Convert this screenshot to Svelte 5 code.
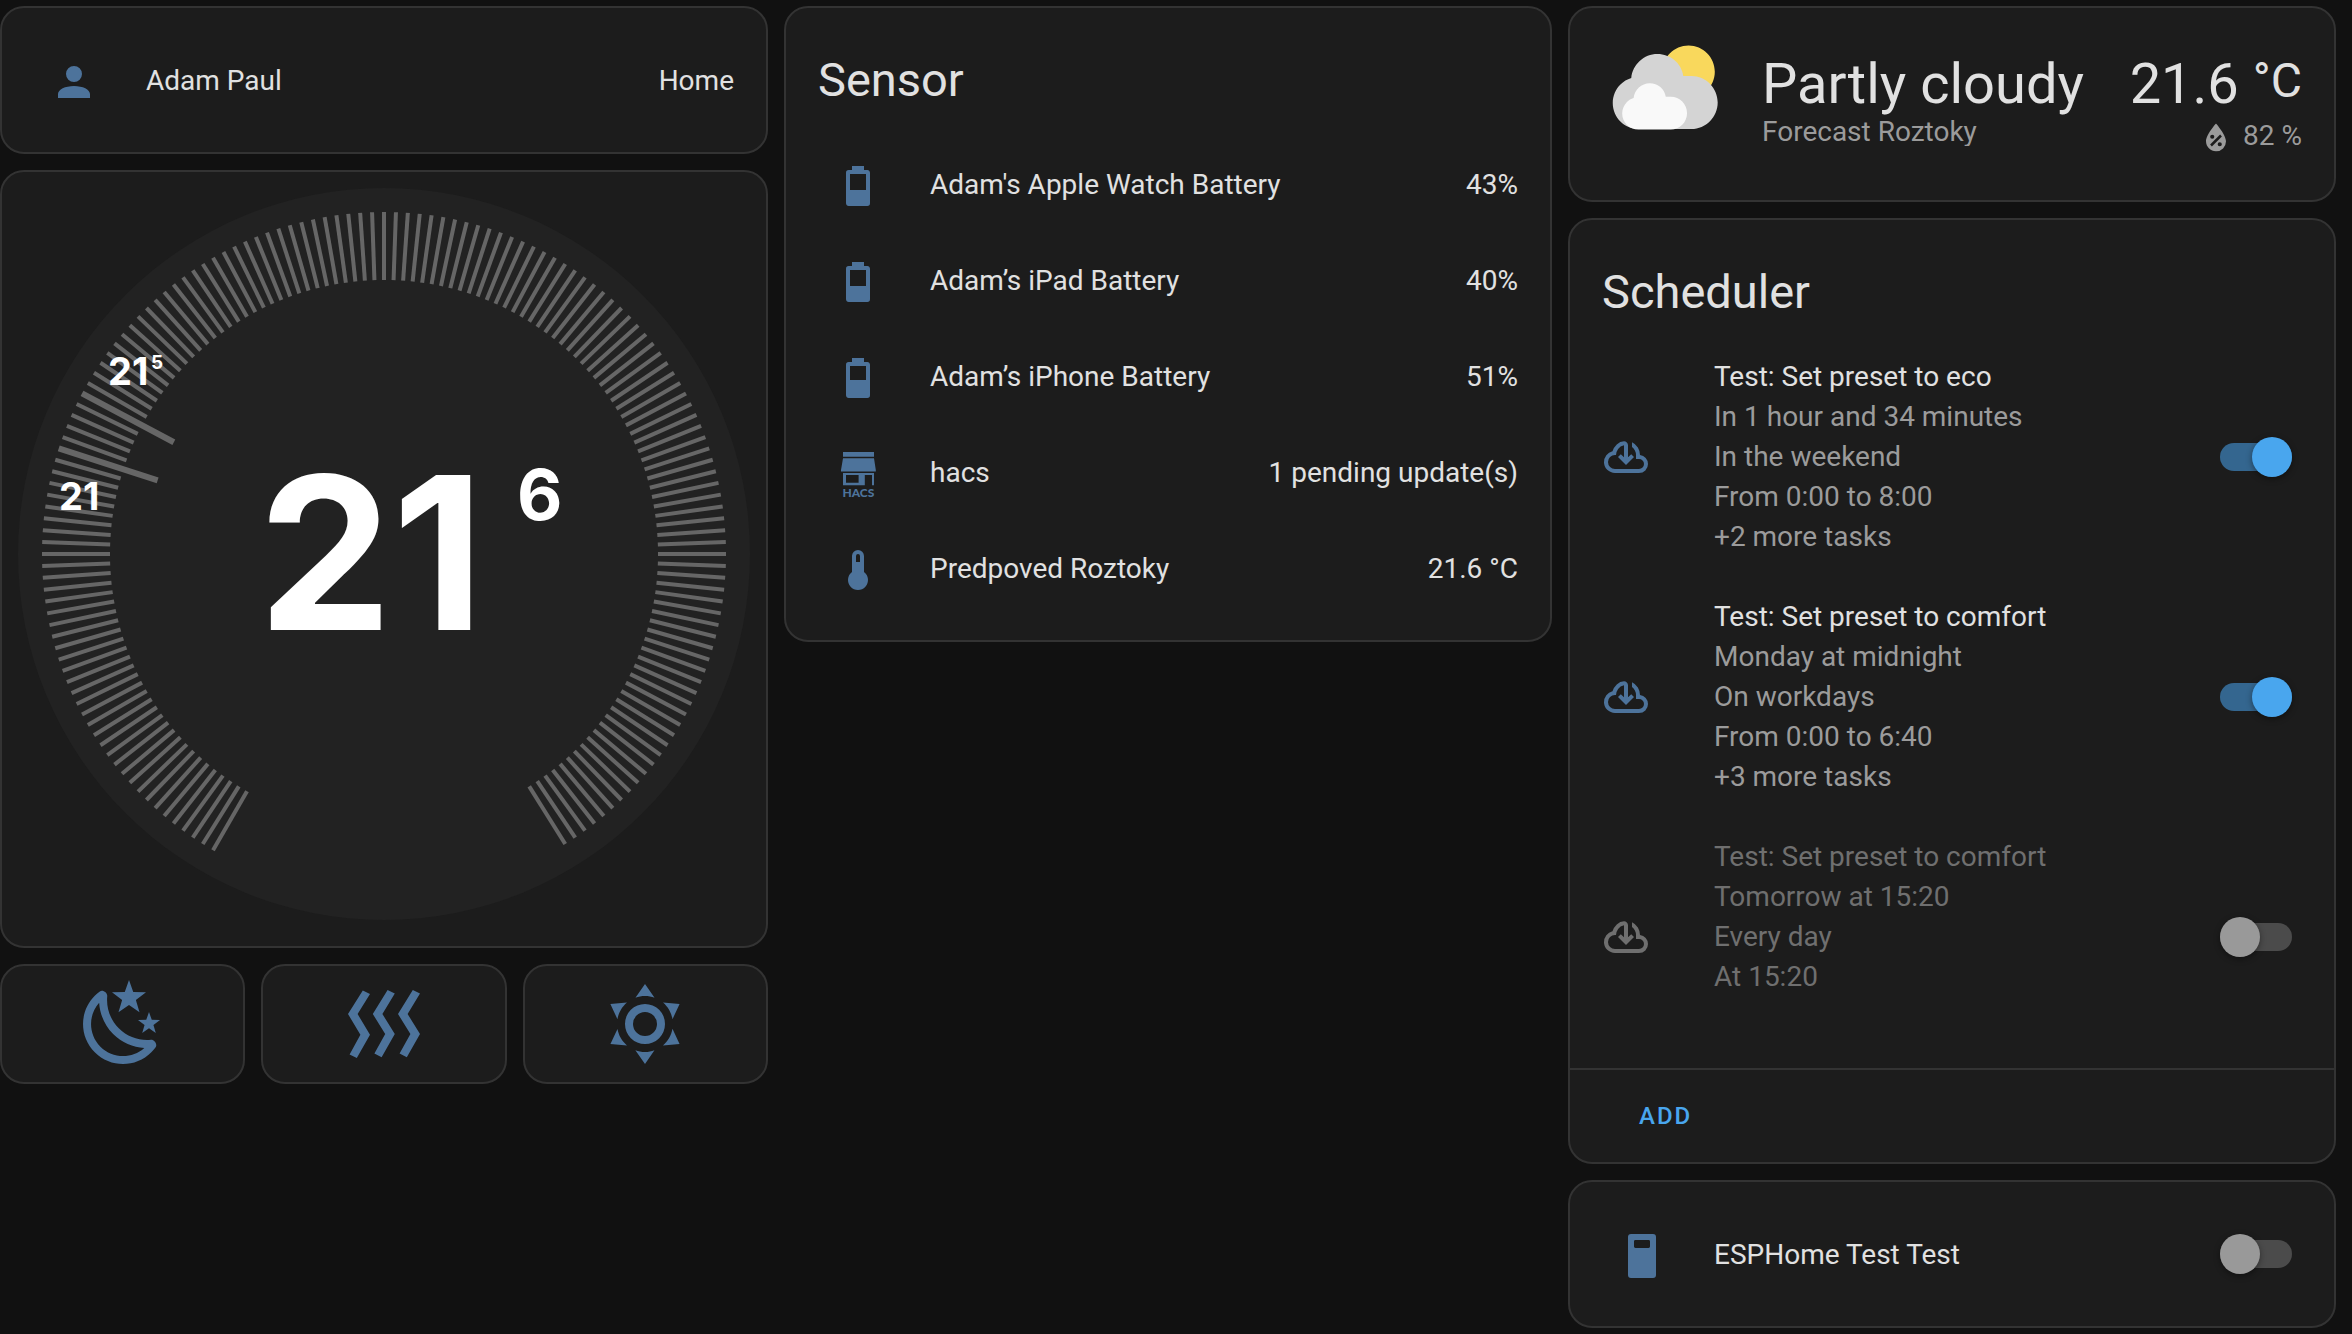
<script>
  const icons = {
    account:
      'M12,4A4,4 0 0,1 16,8A4,4 0 0,1 12,12A4,4 0 0,1 8,8A4,4 0 0,1 12,4M12,14C16.42,14 20,15.79 20,18V20H4V18C4,15.79 7.58,14 12,14Z',
    battery40:
      'M16,14H8V6H16M16.67,4H15V2H9V4H7.33A1.33,1.33 0 0,0 6,5.33V20.67C6,21.4 6.6,22 7.33,22H16.67A1.33,1.33 0 0,0 18,20.67V5.33C18,4.6 17.4,4 16.67,4Z',
    battery50:
      'M16,13H8V6H16M16.67,4H15V2H9V4H7.33A1.33,1.33 0 0,0 6,5.33V20.67C6,21.4 6.6,22 7.33,22H16.67A1.33,1.33 0 0,0 18,20.67V5.33C18,4.6 17.4,4 16.67,4Z',
    thermometer:
      'M15 13V5A3 3 0 0 0 9 5V13A5 5 0 1 0 15 13M12 4A1 1 0 0 1 13 5V8H11V5A1 1 0 0 1 12 4Z',
    device:
      'M6.5 1H17.5A1.5 1.5 0 0 1 19 2.5V21.5A1.5 1.5 0 0 1 17.5 23H6.5A1.5 1.5 0 0 1 5 21.5V2.5A1.5 1.5 0 0 1 6.5 1M8.7 4A.7 .7 0 0 0 8 4.7V7.3A.7 .7 0 0 0 8.700 8H15.3A.7 .7 0 0 0 16 7.3V4.7A.7 .7 0 0 0 15.3 4Z',
    cloud:
      'M6.5 20Q4.22 20 2.61 18.43 1 16.85 1 14.58 1 12.63 2.17 11.1 3.35 9.57 5.25 9.15 5.68 7.35 7.38 5.73 9.07 4.1 11 4.1 11.83 4.1 12.41 4.69 13 5.28 13 6.1V12.15L14.6 10.6L16 12L12 16L8 12L9.4 10.6L11 12.15V6.1Q9.1 6.45 8.05 7.94 7 9.43 7 11H6.5Q5.05 11 4.03 12.03 3 13.05 3 14.5 3 15.95 4.03 17 5.05 18 6.5 18H18.5Q19.55 18 20.27 17.27 21 16.55 21 15.5 21 14.45 20.27 13.73 19.55 13 18.5 13H17V11Q17 9.8 16.45 8.76 15.9 7.73 15 7V4.68Q16.85 5.55 17.93 7.26 19 9 19 11 20.73 11.2 21.86 12.5 23 13.78 23 15.5 23 17.38 21.69 18.69 20.38 20 18.5 20M12 11.05Z',
    humidity:
      'M12,3.25C12,3.25 6,10 6,14C6,17.32 8.69,20 12,20A6,6 0 0,0 18,14C18,10 12,3.25 12,3.25M14.47,9.97L15.53,11.03L9.53,17.03L8.47,15.97M9.75,10A1.25,1.25 0 0,1 11,11.25A1.25,1.25 0 0,1 9.75,12.5A1.25,1.25 0 0,1 8.5,11.25A1.25,1.25 0 0,1 9.75,10M14.25,14.5A1.25,1.25 0 0,1 15.5,15.75A1.25,1.25 0 0,1 14.25,17A1.25,1.25 0 0,1 13,15.75A1.25,1.25 0 0,1 14.25,14.5Z',
    night:
      'M17.75,4.09L15.22,6.03L16.13,9.09L13.5,7.28L10.87,9.09L11.78,6.03L9.25,4.09L12.44,4L13.5,1L14.56,4L17.75,4.09M21.25,11L19.61,12.25L20.2,14.23L18.5,13.06L16.8,14.23L17.39,12.25L15.75,11L17.81,10.95L18.5,9L19.19,10.95L21.25,11M18.97,15.95C19.8,15.87 20.69,17.05 20.16,17.8C19.84,18.25 19.5,18.67 19.08,19.07C15.17,23 8.84,23 4.94,19.07C1.03,15.17 1.03,8.83 4.94,4.93C5.34,4.53 5.76,4.17 6.21,3.85C6.96,3.32 8.14,4.21 8.06,5.04C7.79,7.9 8.75,10.87 10.95,13.06C13.14,15.26 16.1,16.22 18.97,15.95M17.33,17.97C14.5,17.81 11.7,16.64 9.53,14.5C7.36,12.31 6.2,9.5 6.04,6.68C3.23,9.82 3.34,14.64 6.35,17.66C9.37,20.67 14.19,20.78 17.33,17.97Z',
    heat:
      'M8.5 4.5L5.4 9.5L8.5 14.7L5.2 20.5L3.4 19.6L6.1 14.7L3 9.5L6.7 3.6L8.5 4.5M14.7 4.4L11.6 9.5L14.7 14.5L11.4 20.3L9.6 19.4L12.3 14.5L9.2 9.5L12.9 3.5L14.7 4.4M21 4.4L17.9 9.5L21 14.5L17.7 20.3L15.9 19.4L18.6 14.5L15.5 9.5L19.2 3.5L21 4.4',
    sun:
      'M12,7A5,5 0 0,1 17,12A5,5 0 0,1 12,17A5,5 0 0,1 7,12A5,5 0 0,1 12,7M12,9A3,3 0 0,0 9,12A3,3 0 0,0 12,15A3,3 0 0,0 15,12A3,3 0 0,0 12,9M12,2L14.39,5.42C13.65,5.15 12.84,5 12,5C11.16,5 10.35,5.15 9.61,5.42L12,2M3.34,7L7.5,6.65C6.9,7.16 6.36,7.78 5.94,8.5C5.5,9.24 5.25,10 5.11,10.79L3.34,7M3.36,17L5.12,13.23C5.26,14 5.53,14.78 5.95,15.5C6.37,16.24 6.91,16.86 7.5,17.37L3.36,17M20.65,7L18.88,10.79C18.74,10 18.47,9.23 18.05,8.5C17.63,7.78 17.1,7.15 16.5,6.64L20.65,7M20.64,17L16.5,17.36C17.09,16.85 17.62,16.22 18.04,15.5C18.46,14.77 18.73,14 18.87,13.21L20.64,17M12,22L9.59,18.56C10.33,18.83 11.14,19 12,19C12.82,19 13.63,18.83 14.37,18.56L12,22Z'
  };

  const sensors = [
    { icon: 'battery40', name: "Adam's Apple Watch Battery", state: '43%' },
    { icon: 'battery40', name: 'Adam’s iPad Battery', state: '40%' },
    { icon: 'battery50', name: 'Adam’s iPhone Battery', state: '51%' },
    { icon: 'hacs', name: 'hacs', state: '1 pending update(s)' },
    { icon: 'thermometer', name: 'Predpoved Roztoky', state: '21.6 °C' }
  ];

  let schedules = $state([
    {
      name: 'Test: Set preset to eco',
      lines: ['In 1 hour and 34 minutes', 'In the weekend', 'From 0:00 to 8:00', '+2 more tasks'],
      on: true
    },
    {
      name: 'Test: Set preset to comfort',
      lines: ['Monday at midnight', 'On workdays', 'From 0:00 to 6:40', '+3 more tasks'],
      on: true
    },
    {
      name: 'Test: Set preset to comfort',
      lines: ['Tomorrow at 15:20', 'Every day', 'At 15:20'],
      on: false
    }
  ]);

  const presets = [
    { icon: 'night', label: 'Sleep' },
    { icon: 'heat', label: 'Heat' },
    { icon: 'sun', label: 'Day' }
  ];

  let espOn = $state(false);

  // Dial scale: 150 ticks spread over 300 degrees; the marked ones are longer and wider.
  const marked = [-62, -72];
  const ticks = Array.from({ length: 150 }, (_, i) => {
    const angle = -150 + i * 2;
    return { angle, big: marked.includes(angle) };
  });
</script>

{#snippet icon(name)}
  <svg class="icon" viewBox="0 0 24 24" aria-hidden="true">
    {#if name === 'hacs'}
      <path d="M4.500 1H20V3.400H4.500ZM4.500 4.100H20L20.900 10V10.800H3.500V10Z" />
      <path fill-rule="evenodd" d="M4.500 11.500H20V17.600H19V12.500H15.400V17.600H4.500ZM6 12.500V16.400H12.300V12.500Z" />
      <text class="hacs" x="12.200" y="23.400" text-anchor="middle">HACS</text>
    {:else}
      <path fill-rule="evenodd" d={icons[name]} />
    {/if}
  </svg>
{/snippet}

<main class="board">
  <div class="column">
    <section class="card rows">
      <div class="row">
        <span class="badge">{@render icon('account')}</span>
        <span class="name">Adam Paul</span>
        <span class="state">Home</span>
      </div>
    </section>

    <section class="card thermostat" aria-label="Thermostat">
      <svg class="dial" viewBox="0 0 732 732">
        <circle class="face" cx="366" cy="366" r="366" />
        {#each ticks as t (t.angle)}
          <rect
            class="tick"
            x={t.big ? 363 : 364}
            y="24"
            width={t.big ? 6 : 4}
            height={t.big ? 104 : 68}
            transform="rotate({t.angle} 366 366)"
          />
        {/each}
        <text class="current" x="353" y="442" text-anchor="middle">21</text>
        <text class="fraction" x="499" y="332">6</text>
        <text class="label" x="90" y="197">21</text>
        <text class="label-fraction" x="133" y="181">5</text>
        <text class="label" x="41" y="322">21</text>
      </svg>
    </section>

    <div class="presets">
      {#each presets as p (p.icon)}
        <button class="card preset" type="button" aria-label={p.label}>{@render icon(p.icon)}</button>
      {/each}
    </div>
  </div>

  <div class="column">
    <section class="card">
      <h2>Sensor</h2>
      <div class="rows sensors">
        {#each sensors as s (s.name)}
          <div class="row">
            <span class="badge">{@render icon(s.icon)}</span>
            <span class="name">{s.name}</span>
            <span class="state">{s.state}</span>
          </div>
        {/each}
      </div>
    </section>
  </div>

  <div class="column">
    <section class="card weather">
      <svg class="weather-icon" viewBox="0 0 17 17" aria-hidden="true">
        <path fill="#f9d85c" d="m 14.981 4.2112 c 0 1.9244 -1.56 3.4844 -3.484 3.4844 -1.9244 0 -3.4844 -1.56 -3.4844 -3.4844 s 1.56 -3.484 3.4844 -3.484 c 1.924 0 3.484 1.5596 3.484 3.484" />
        <path fill="#d4d4d4" d="m3.8863 5.035c-0.54892 0.16898-1.04 0.46637-1.4372 0.8636-0.63077 0.63041-1.0206 1.4933-1.0206 2.455 0 1.9251 1.5589 3.4682 3.4837 3.4682h6.9688c1.9251 0 3.484-1.5981 3.484-3.5232 0-1.9251-1.5589-3.5232-3.484-3.5232h-1.0834c-0.25294-1.6916-1.6986-2.9083-3.4463-2.9083-1.7995 0-3.2805 1.4153-3.465 3.1679" />
        <path fill="#f9f9f9" d="m4.1996 7.6995c-0.33902 0.10407-0.64276 0.28787-0.88794 0.5334-0.39017 0.38982-0.63147 0.92322-0.63147 1.5176 0 1.1896 0.96414 2.1431 2.1537 2.1431h4.3071c1.1896 0 2.153-0.98742 2.153-2.1777 0-1.1896-0.96344-2.1777-2.153-2.1777h-0.66992c-0.15593-1.0449-1.0499-1.7974-2.1297-1.7974-1.112 0-2.0274 0.87524-2.1417 1.9586" />
      </svg>
      <div class="condition">
        <div class="big">Partly cloudy</div>
        <div class="place">Forecast Roztoky</div>
      </div>
      <div class="reading">
        <div class="big temp">21.6 <span class="unit">°C</span></div>
        <div class="humidity">{@render icon('humidity')}<span>82 %</span></div>
      </div>
    </section>

    <section class="card">
      <h2>Scheduler</h2>
      <div class="schedules">
        {#each schedules as s, i}
          <div class="schedule" class:off={!s.on}>
            <span class="schedule-icon">{@render icon('cloud')}</span>
            <label class="name" for="schedule-{i}">
              <span class="title">{s.name}</span>
              {#each s.lines as line}
                <span class="line">{line}</span>
              {/each}
            </label>
            <input class="switch" type="checkbox" role="switch" id="schedule-{i}" bind:checked={s.on} />
          </div>
        {/each}
      </div>
      <div class="footer">
        <button class="add" type="button">ADD</button>
      </div>
    </section>

    <section class="card rows">
      <div class="row">
        <span class="badge">{@render icon('device')}</span>
        <label class="name" for="esp">ESPHome Test Test</label>
        <input class="switch" type="checkbox" role="switch" id="esp" bind:checked={espOn} />
      </div>
    </section>
  </div>
</main>

<style>
  :global(body) {
    background: #111111;
  }

  .board {
    display: grid;
    grid-template-columns: repeat(3, minmax(0, 1fr));
    align-items: start;
    gap: 16px;
    padding: 6px 16px 6px 0;
    color: #e1e1e1;
    font: 400 28px/40px Roboto, sans-serif;
  }

  .column {
    display: flex;
    flex-direction: column;
    gap: 16px;
  }

  .card {
    box-sizing: border-box;
    border: 2px solid #333333;
    border-radius: 24px;
    background: #1c1c1c;
  }

  h2 {
    margin: 0;
    padding: 24px 32px 0;
    font-size: 47px;
    font-weight: 400;
    line-height: 96px;
  }

  .icon {
    display: block;
    flex: none;
    width: 48px;
    height: 48px;
    overflow: visible;
    fill: currentColor;
  }

  .hacs {
    font: 900 6px Lato, sans-serif;
  }

  .rows {
    display: flex;
    flex-direction: column;
    gap: 16px;
    padding: 32px;
  }

  .sensors {
    padding-top: 16px;
  }

  .row {
    display: flex;
    align-items: center;
    min-height: 80px;
  }

  .badge {
    box-sizing: border-box;
    display: flex;
    flex: none;
    align-items: center;
    justify-content: center;
    width: 80px;
    height: 80px;
    padding-top: 4px;
    margin-right: 32px;
    color: #4d739b;
  }

  .name {
    flex: 1;
    min-width: 0;
  }

  .row .name,
  .state {
    padding-top: 2px;
  }

  .thermostat {
    padding: 16px 16px 26px;
  }

  .dial {
    display: block;
    width: 100%;
    height: auto;
    fill: #ffffff;
    font-family: Inter, sans-serif;
    font-weight: 700;
  }

  .face {
    fill: #222222;
  }

  .tick {
    fill: #666666;
  }

  .current {
    font-size: 213px;
  }

  .fraction {
    font-size: 70px;
  }

  .label {
    font-size: 38px;
  }

  .label-fraction {
    font-size: 19px;
  }

  .presets {
    display: grid;
    grid-template-columns: repeat(3, minmax(0, 1fr));
    gap: 16px;
  }

  .preset {
    display: flex;
    align-items: center;
    justify-content: center;
    padding: 10px;
    color: #4d739b;
    cursor: pointer;
  }

  .preset .icon {
    width: 96px;
    height: 96px;
  }

  .weather {
    display: flex;
    align-items: flex-start;
    padding: 32px;
  }

  .weather-icon {
    flex: none;
    width: 128px;
    height: 128px;
    margin-right: 32px;
  }

  .condition {
    flex: 1;
    min-width: 0;
    padding-top: 11px;
  }

  .reading {
    display: flex;
    flex-direction: column;
    align-items: flex-end;
    padding-top: 11px;
  }

  .big {
    font-size: 56px;
    line-height: 67px;
    white-space: nowrap;
  }

  .temp {
    display: flex;
    align-items: flex-start;
    gap: 14px;
  }

  .unit {
    font-size: 48px;
    line-height: 60px;
  }

  .place {
    overflow: hidden;
    color: #9b9b9b;
    line-height: 28px;
    white-space: nowrap;
  }

  .humidity {
    display: flex;
    gap: 7px;
    color: #9b9b9b;
    line-height: 36px;
  }

  .humidity .icon {
    width: 40px;
    height: 40px;
  }

  .schedules {
    display: flex;
    flex-direction: column;
    gap: 39px;
    padding: 16px 32px 31px;
  }

  .schedule {
    display: flex;
    align-items: center;
    min-height: 201px;
    color: #9b9b9b;
  }

  .schedule .name {
    align-self: flex-start;
    padding-top: 1px;
  }

  .schedule-icon {
    flex: none;
    width: 80px;
    margin-right: 32px;
    color: #4d739b;
  }

  .title,
  .line {
    display: block;
  }

  .title {
    color: #e1e1e1;
  }

  .off,
  .off .title,
  .off .schedule-icon {
    color: #6f6f6f;
  }

  .switch {
    display: flex;
    flex: none;
    align-items: center;
    width: 72px;
    height: 28px;
    margin: 0 10px;
    border-radius: 14px;
    background: #4b4b4b;
    appearance: none;
    cursor: pointer;
  }

  .switch::before {
    content: '';
    flex: none;
    width: 40px;
    height: 40px;
    border-radius: 50%;
    background: #999999;
    box-shadow: 0 2px 6px rgba(0, 0, 0, 0.4);
  }

  .switch:checked {
    background: #34668f;
  }

  .switch:checked::before {
    margin-left: auto;
    background: #49a6ee;
  }

  .footer {
    display: flex;
    align-items: center;
    padding: 10px 53px;
    border-top: 2px solid #333333;
  }

  .add {
    height: 72px;
    padding: 0 16px;
    border: 0;
    background: none;
    color: #49a6ee;
    font: 500 24px/36px Roboto, sans-serif;
    letter-spacing: 2px;
    cursor: pointer;
  }
</style>
